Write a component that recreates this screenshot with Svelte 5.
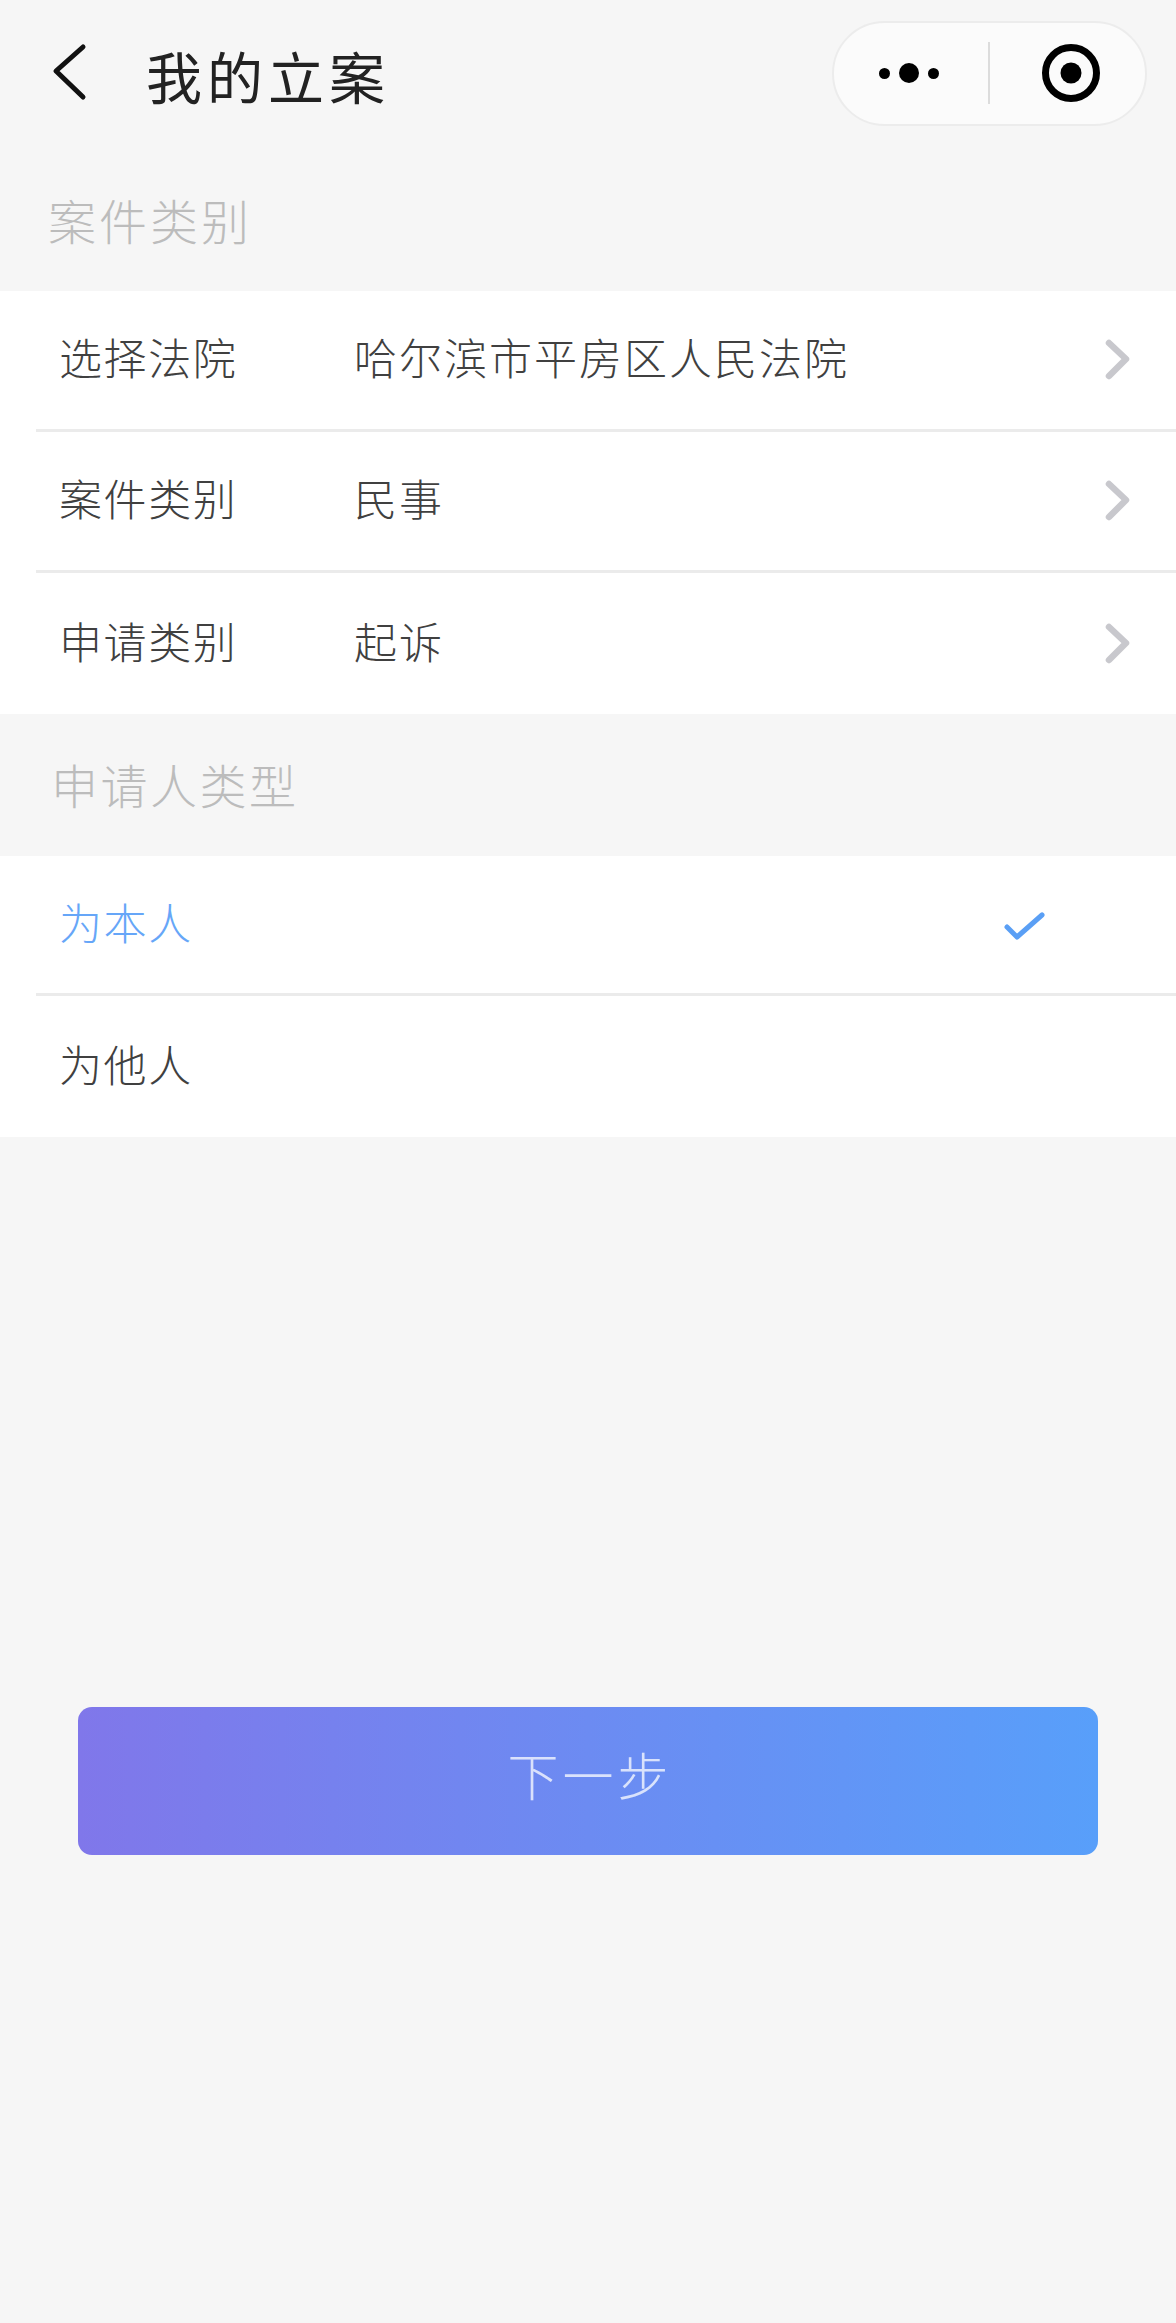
<script>
  const caseRows = [
    { label: '选择法院', value: '哈尔滨市平房区人民法院' },
    { label: '案件类别', value: '民事' },
    { label: '申请类别', value: '起诉' }
  ];

  const applicantRows = [
    { label: '为本人', active: true },
    { label: '为他人', active: false }
  ];
</script>

<div class="page">
  <header class="nav">
    <svg class="back" width="46" height="62" viewBox="0 0 46 62" aria-hidden="true">
      <path d="M37 6 L10 30 L37 56" />
    </svg>
    <h1>我的立案</h1>
    <div class="capsule">
      <div class="dots">
        <span class="dot"></span>
        <span class="dot big"></span>
        <span class="dot"></span>
      </div>
      <span class="sep"></span>
      <span class="target"></span>
    </div>
  </header>

  <h2 class="section first">案件类别</h2>
  <ul class="list">
    {#each caseRows as row}
      <li class="row">
        <span class="label">{row.label}</span>
        <span class="value">{row.value}</span>
        <svg class="arrow" width="28" height="44" viewBox="0 0 28 44" aria-hidden="true">
          <path d="M5 5 L22 21 L5 38" />
        </svg>
      </li>
    {/each}
  </ul>

  <h2 class="section second">申请人类型</h2>
  <ul class="list">
    {#each applicantRows as row}
      <li class="row" class:active={row.active}>
        <span class="label">{row.label}</span>
        {#if row.active}
          <svg class="check" width="44" height="32" viewBox="0 0 44 32" aria-hidden="true">
            <path d="M5 15 L15 25 L40 3" />
          </svg>
        {/if}
      </li>
    {/each}
  </ul>

  <button class="next" type="button">下一步</button>
</div>

<style>
  :global(body) {
    background: #f6f6f6;
  }

  .page {
    min-height: 2323px;
    background: #f6f6f6;
    font-family: "Noto Sans CJK SC", "Noto Sans", sans-serif;
    font-weight: 300;
    overflow: hidden;
  }

  .nav {
    display: flex;
    align-items: center;
    height: 146px;
    padding: 0 29px 0 46px;
    box-sizing: border-box;
  }

  .back {
    flex: none;
    margin-top: -2px;
  }

  .back path {
    fill: none;
    stroke: #111;
    stroke-width: 5;
    stroke-linecap: round;
    stroke-linejoin: round;
  }

  h1 {
    flex: 1;
    margin: 4px 0 0 54px;
    font-size: 56px;
    font-weight: 400;
    letter-spacing: 5px;
    line-height: 60px;
    color: #222;
  }

  .capsule {
    display: flex;
    align-items: center;
    width: 315px;
    height: 105px;
    box-sizing: border-box;
    border: 2px solid #ececec;
    border-radius: 53px;
    background: #fbfbfb;
  }

  .dots {
    display: flex;
    align-items: center;
    gap: 9px;
    margin-left: 45px;
  }

  .dot {
    width: 11px;
    height: 11px;
    border-radius: 50%;
    background: #000;
  }

  .dot.big {
    width: 20px;
    height: 20px;
  }

  .sep {
    width: 2px;
    height: 62px;
    margin-left: 49px;
    background: #dcdcdc;
  }

  .target {
    position: relative;
    width: 58px;
    height: 58px;
    margin-left: 52px;
    box-sizing: border-box;
    border: 7px solid #000;
    border-radius: 50%;
  }

  .target::after {
    content: '';
    position: absolute;
    top: 50%;
    left: 50%;
    width: 21px;
    height: 21px;
    border-radius: 50%;
    background: #000;
    transform: translate(-50%, -50%);
  }

  .section {
    display: flex;
    align-items: center;
    margin: 0;
    font-weight: 300;
    color: #bcbcbc;
  }

  .section.first {
    height: 145px;
    padding: 0 0 0 48px;
    font-size: 48px;
    letter-spacing: 3px;
  }

  .section.second {
    height: 142px;
    padding: 0 0 4px 51px;
    box-sizing: border-box;
    font-size: 47px;
    letter-spacing: 2.5px;
  }

  .list {
    margin: 0;
    padding: 0;
    list-style: none;
    background: #fff;
  }

  .row {
    display: flex;
    align-items: center;
    height: 138px;
    margin-left: 36px;
    padding: 0 30px 0 24px;
    border-bottom: 3px solid #ebebeb;
    font-size: 43px;
    letter-spacing: 1.6px;
    color: #404040;
  }

  .row:last-child {
    border-bottom: 0;
    height: 141px;
  }

  .section.second + .list .row:first-child {
    height: 137px;
  }

  .label {
    flex: none;
    width: 295px;
    margin-left: -1px;
    padding-bottom: 8px;
  }

  .value {
    flex: 1;
    padding-bottom: 8px;
    letter-spacing: 2px;
  }

  .arrow {
    flex: none;
    margin-left: auto;
    transform: translateX(-14px);
  }

  .arrow path {
    fill: none;
    stroke: #c8c8cd;
    stroke-width: 6.5;
    stroke-linecap: round;
    stroke-linejoin: round;
  }

  .row.active {
    color: #66a6f8;
  }

  .check {
    flex: none;
    margin-left: auto;
    margin-right: 100px;
    margin-top: 6px;
  }

  .check path {
    fill: none;
    stroke: #5a9ff5;
    stroke-width: 5;
    stroke-linecap: round;
    stroke-linejoin: round;
  }

  .next {
    display: block;
    width: 1020px;
    height: 148px;
    margin: 570px 0 0 78px;
    padding: 0 0 14px 4px;
    border: 0;
    border-radius: 14px;
    background: linear-gradient(90deg, #8077ea 0%, #589ffa 100%);
    font-family: inherit;
    font-size: 51px;
    font-weight: 300;
    letter-spacing: 4px;
    color: rgba(255, 255, 255, 0.75);
  }
</style>
